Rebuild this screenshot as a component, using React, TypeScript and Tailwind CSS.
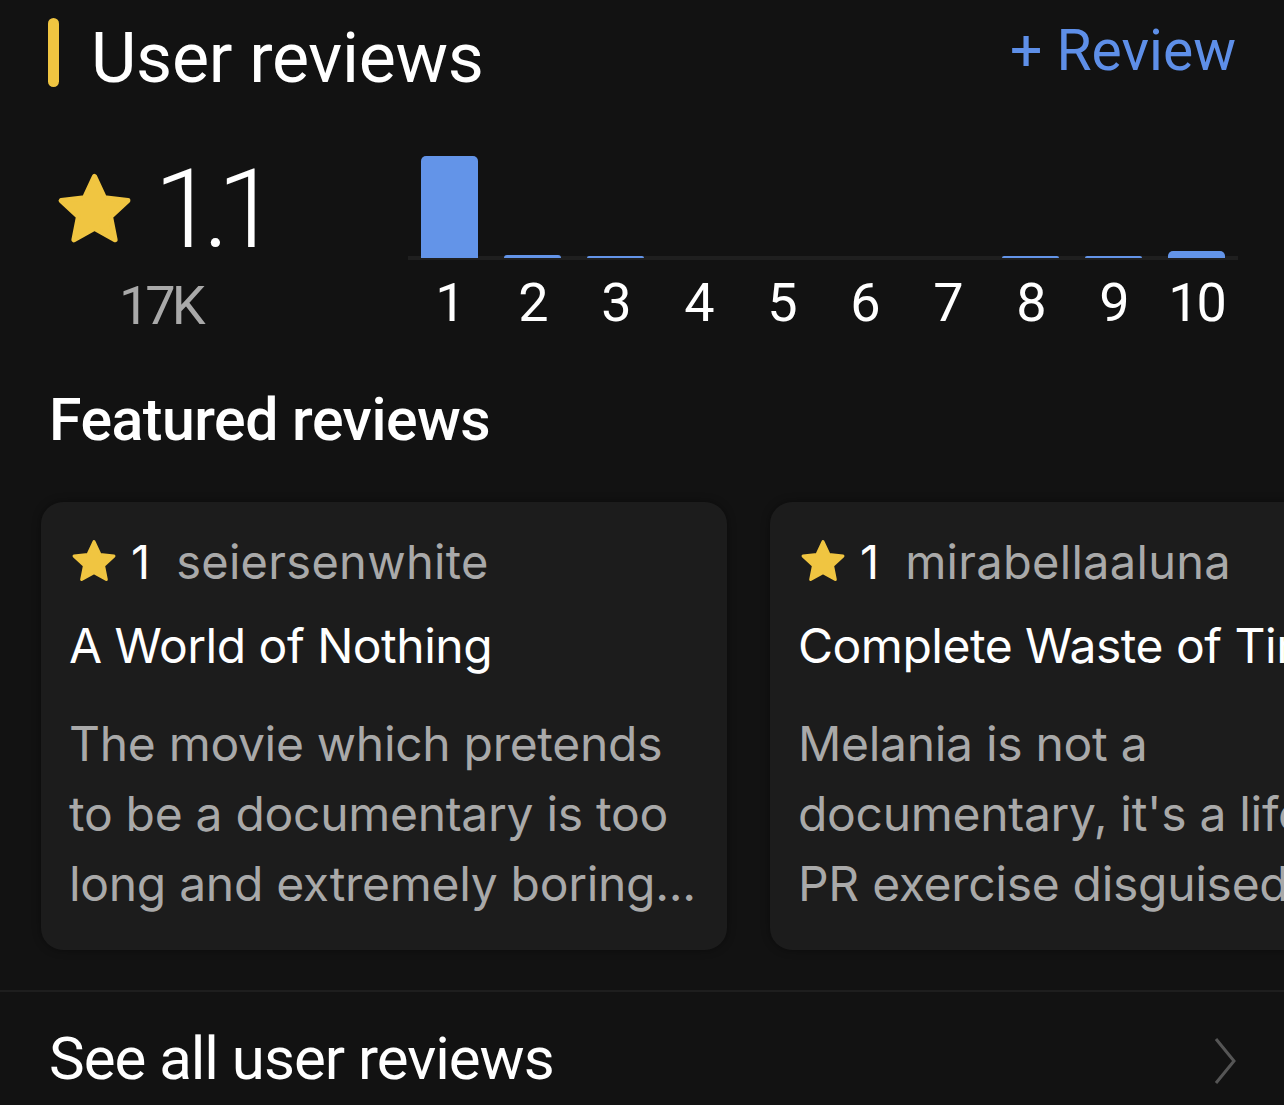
import React from 'react';

const bars = [
  { label: '1', h: 102 },
  { label: '2', h: 3 },
  { label: '3', h: 2 },
  { label: '4', h: 0 },
  { label: '5', h: 0 },
  { label: '6', h: 0 },
  { label: '7', h: 0 },
  { label: '8', h: 2 },
  { label: '9', h: 2 },
  { label: '10', h: 7 },
];

const reviews = [
  {
    user: 'seiersenwhite',
    title: 'A World of Nothing',
    lines: ['The movie which pretends', 'to be a documentary is too', 'long and extremely boring...'],
  },
  {
    user: 'mirabellaaluna',
    title: 'Complete Waste of Time',
    lines: ['Melania is not a', "documentary, it's a lifestyle", 'PR exercise disguised as art...'],
  },
];

function Star({ className }: { className?: string }) {
  return (
    <svg viewBox="0 0 24 24" className={className} aria-hidden>
      <path
        d="M12 2.6l2.75 5.9 6.45.78-4.77 4.43 1.25 6.38L12 16.93l-5.68 3.16 1.25-6.38L2.8 9.28l6.45-.78z"
        fill="#f0c541"
        stroke="#f0c541"
        strokeWidth="1.4"
        strokeLinejoin="round"
      />
    </svg>
  );
}

export default function App() {
  return (
    <div className="w-[1284px] h-[1105px] overflow-hidden bg-[#121212] text-white font-['Roboto',sans-serif]">
      {/* header */}
      <div className="flex items-start justify-between pl-[48px] pr-[48px] pt-[18px]">
        <div className="flex items-start gap-[32px]">
          <div className="w-[11px] h-[69px] rounded-full bg-[#f0c541]" />
          <h2 className="text-[70px] leading-[80px] tracking-[-0.3px]">User reviews</h2>
        </div>
        <span className="text-[57px] leading-[70px] text-[#5e8fe8] -mt-[2px]">+ Review</span>
      </div>

      {/* summary */}
      <div className="flex mt-[52px]">
        <div className="w-[408px] pl-[51px] pt-[10px]">
          <div className="flex items-center gap-[16px]">
            <Star className="w-[87px] h-[87px]" />
            <span className="text-[110px] leading-[100px] font-light tracking-[-12px]">1.1</span>
          </div>
          <div className="pl-[68px] mt-[16px] text-[54px] leading-[60px] text-[#a9a9a9] tracking-[-4px]">17K</div>
        </div>
        <div className="w-[830px]">
          <div className="h-[110px] flex items-end border-b-[4px] border-[#1f1f1f]">
            {bars.map((b) => (
              <div key={b.label} className="flex-1 flex justify-center">
                {b.h > 0 && (
                  <div
                    className="w-[57px] bg-[#6394e8] rounded-t-[5px] -mb-[2px]"
                    style={{ height: b.h }}
                  />
                )}
              </div>
            ))}
          </div>
          <div className="flex mt-[13px]">
            {bars.map((b) => (
              <div key={b.label} className="flex-1 text-center text-[54px] leading-[60px] tracking-[-2px]">
                {b.label}
              </div>
            ))}
          </div>
        </div>
      </div>

      {/* featured */}
      <h3 className="pl-[49px] mt-[52px] text-[59px] leading-[64px] font-medium tracking-[-0.5px]">
        Featured reviews
      </h3>

      <div className="flex gap-[43px] pl-[41px] mt-[50px] font-['Inter',sans-serif]">
        {reviews.map((r) => (
          <div
            key={r.user}
            className="w-[686px] h-[448px] shrink-0 rounded-[22px] bg-[#1c1c1c] px-[28px] pt-[32px] shadow-[0_0_8px_rgba(0,0,0,0.4)]"
          >
            <div className="flex items-center text-[47px] leading-[56px]">
              <Star className="w-[52px] h-[52px] -ml-[1px]" />
              <span className="ml-[11px]">1</span>
              <span className="ml-[26px] text-[#a9a9a9] tracking-[0.3px]">{r.user}</span>
            </div>
            <div className="mt-[28px] text-[48px] leading-[56px] whitespace-nowrap tracking-[-0.5px]">{r.title}</div>
            <div className="mt-[35px] text-[48px] leading-[70px] text-[#a9a9a9] tracking-[-0.3px]">
              {r.lines.map((l) => (
                <div key={l} className="whitespace-nowrap">{l}</div>
              ))}
            </div>
          </div>
        ))}
      </div>

      {/* see all */}
      <div className="mt-[40px] border-t-[2px] border-[#1e1e1e] flex items-start justify-between pl-[49px] pr-[46px] pt-[35px]">
        <span className="text-[60px] leading-[64px] tracking-[-1px]">See all user reviews</span>
        <svg viewBox="0 0 24 48" className="w-[26px] h-[48px] mt-[10px]" aria-hidden>
          <path d="M3 2l18 22L3 46" fill="none" stroke="#555" strokeWidth="3" />
        </svg>
      </div>
    </div>
  );
}
